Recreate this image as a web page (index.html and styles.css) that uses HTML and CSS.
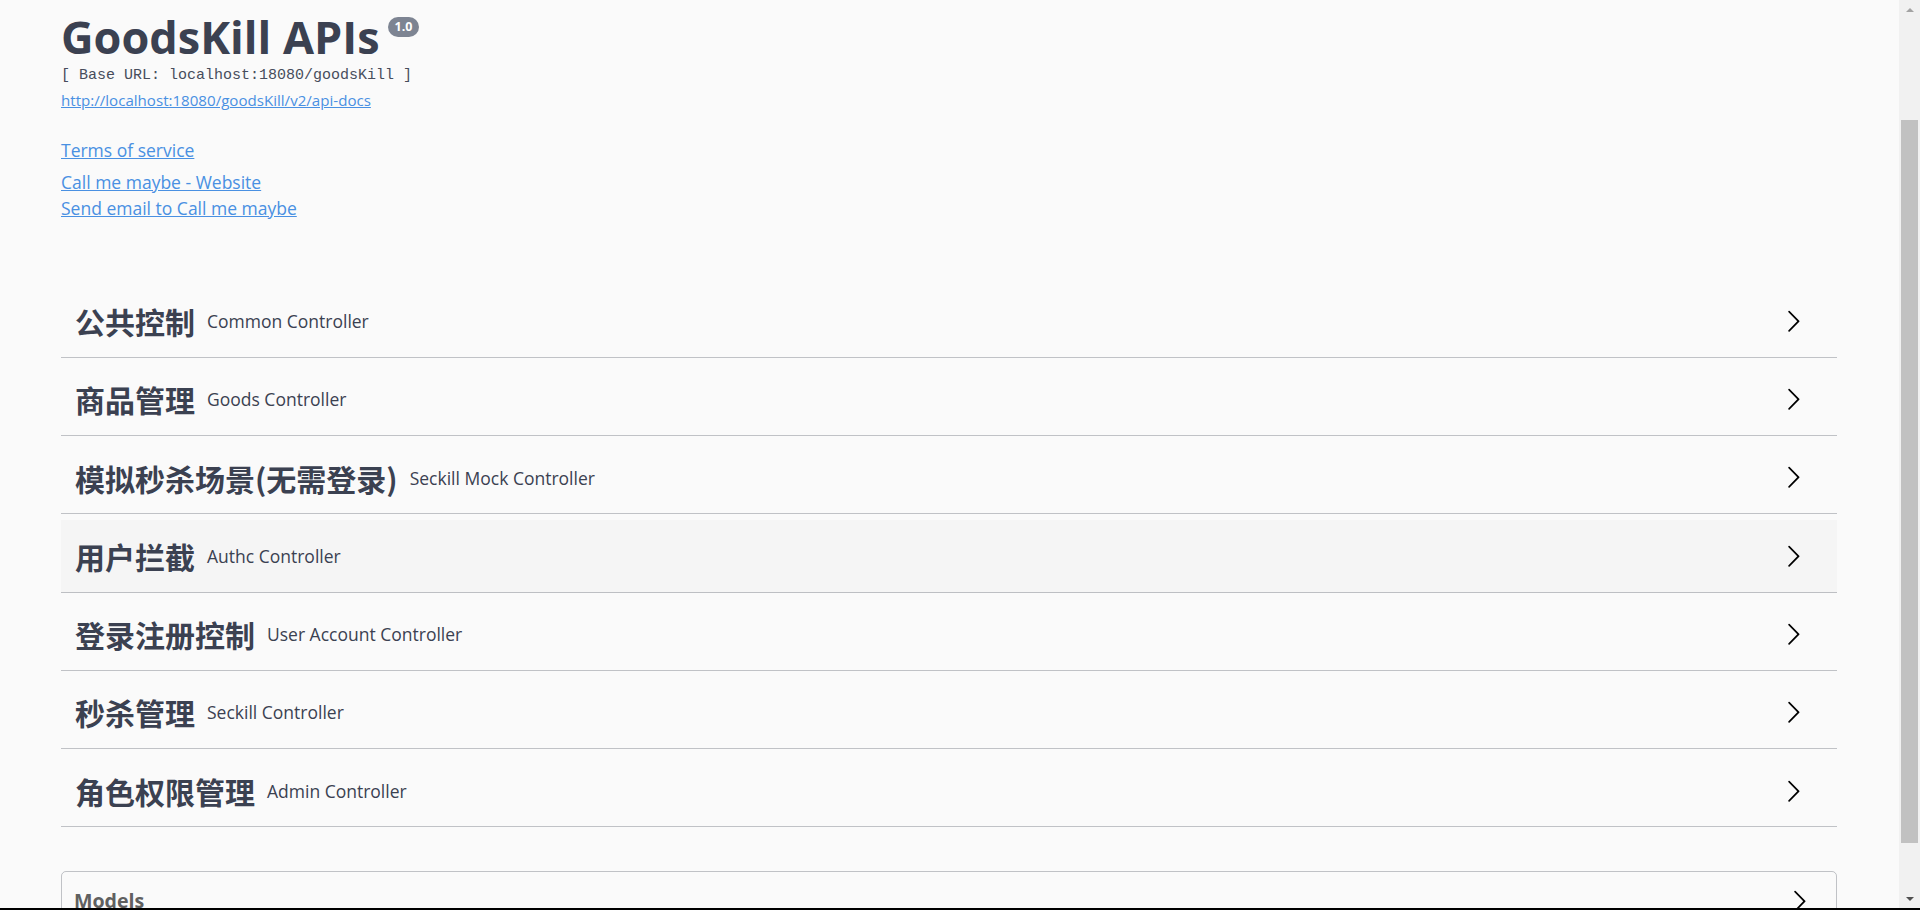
FILE: index.html
```html
<!DOCTYPE html>
<html lang="zh-CN">
<head>
<meta charset="UTF-8" />
<meta name="viewport" content="width=device-width, initial-scale=1" />
<title>GoodsKill APIs</title>
<link rel="stylesheet" href="styles.css">
</head>
<body>

<div class="screen">
  <div class="main">

    <!-- API info -->
    <div class="info">
      <h2 class="title"><span>GoodsKill APIs</span><small>1.0</small></h2>
      <pre class="base-url">[ Base URL: localhost:18080/goodsKill ]</pre>
      <a class="doc-link" href="#">http://localhost:18080/goodsKill/v2/api-docs</a>
      <a class="info-link tos" href="#">Terms of service</a>
      <a class="info-link contact" href="#">Call me maybe - Website</a>
      <a class="info-link" href="#">Send email to Call me maybe</a>
    </div>

    <!-- Tag list -->
    <div class="tags">
      <h4 class="tag"><span class="tag-name">公共控制</span><small>Common Controller</small>
        <svg class="arrow" viewBox="0 0 20 20"><path d="M13.25 10L6.109 2.58a.697.697 0 0 1 0-.979.68.68 0 0 1 .969 0l7.83 7.908a.697.697 0 0 1 0 .979l-7.83 7.908a.68.68 0 0 1-.969 0 .697.697 0 0 1 0-.979L13.25 10z"/></svg>
      </h4>
      <h4 class="tag"><span class="tag-name">商品管理</span><small>Goods Controller</small>
        <svg class="arrow" viewBox="0 0 20 20"><path d="M13.25 10L6.109 2.58a.697.697 0 0 1 0-.979.68.68 0 0 1 .969 0l7.83 7.908a.697.697 0 0 1 0 .979l-7.83 7.908a.68.68 0 0 1-.969 0 .697.697 0 0 1 0-.979L13.25 10z"/></svg>
      </h4>
      <h4 class="tag"><span class="tag-name">模拟秒杀场景(无需登录)</span><small>Seckill Mock Controller</small>
        <svg class="arrow" viewBox="0 0 20 20"><path d="M13.25 10L6.109 2.58a.697.697 0 0 1 0-.979.68.68 0 0 1 .969 0l7.83 7.908a.697.697 0 0 1 0 .979l-7.83 7.908a.68.68 0 0 1-.969 0 .697.697 0 0 1 0-.979L13.25 10z"/></svg>
      </h4>
      <h4 class="tag hover"><span class="tag-name">用户拦截</span><small>Authc Controller</small>
        <svg class="arrow" viewBox="0 0 20 20"><path d="M13.25 10L6.109 2.58a.697.697 0 0 1 0-.979.68.68 0 0 1 .969 0l7.83 7.908a.697.697 0 0 1 0 .979l-7.83 7.908a.68.68 0 0 1-.969 0 .697.697 0 0 1 0-.979L13.25 10z"/></svg>
      </h4>
      <h4 class="tag"><span class="tag-name">登录注册控制</span><small>User Account Controller</small>
        <svg class="arrow" viewBox="0 0 20 20"><path d="M13.25 10L6.109 2.58a.697.697 0 0 1 0-.979.68.68 0 0 1 .969 0l7.83 7.908a.697.697 0 0 1 0 .979l-7.83 7.908a.68.68 0 0 1-.969 0 .697.697 0 0 1 0-.979L13.25 10z"/></svg>
      </h4>
      <h4 class="tag"><span class="tag-name">秒杀管理</span><small>Seckill Controller</small>
        <svg class="arrow" viewBox="0 0 20 20"><path d="M13.25 10L6.109 2.58a.697.697 0 0 1 0-.979.68.68 0 0 1 .969 0l7.83 7.908a.697.697 0 0 1 0 .979l-7.83 7.908a.68.68 0 0 1-.969 0 .697.697 0 0 1 0-.979L13.25 10z"/></svg>
      </h4>
      <h4 class="tag"><span class="tag-name">角色权限管理</span><small>Admin Controller</small>
        <svg class="arrow" viewBox="0 0 20 20"><path d="M13.25 10L6.109 2.58a.697.697 0 0 1 0-.979.68.68 0 0 1 .969 0l7.83 7.908a.697.697 0 0 1 0 .979l-7.83 7.908a.68.68 0 0 1-.969 0 .697.697 0 0 1 0-.979L13.25 10z"/></svg>
      </h4>
    </div>

    <!-- Models -->
    <section class="models">
      <h4><span>Models</span>
        <svg class="arrow" viewBox="0 0 20 20"><path d="M13.25 10L6.109 2.58a.697.697 0 0 1 0-.979.68.68 0 0 1 .969 0l7.83 7.908a.697.697 0 0 1 0 .979l-7.83 7.908a.68.68 0 0 1-.969 0 .697.697 0 0 1 0-.979L13.25 10z"/></svg>
      </h4>
    </section>

  </div>

  <!-- window scrollbar -->
  <div class="scrollbar">
    <span class="sb-arrow up"></span>
    <span class="sb-thumb"></span>
    <span class="sb-arrow down"></span>
  </div>
</div>
<div class="edge"></div>

</body>
</html>
```

FILE: styles.css
```css
html, body {
  margin: 0;
  padding: 0;
  height: 100%;
  overflow: hidden;
}
body {
  background: #fafafa;
  color: #3b4151;
  font-family: "Open Sans", sans-serif;
  display: flex;
  flex-direction: column;
}
.screen {
  flex: 1;
  display: flex;
  min-height: 0;
}
.main {
  flex: 1;
  padding: 0 62px 0 61px;
  overflow: hidden;
}
.edge {
  height: 2px;
  background: #000;
}

/* info block */
.info {
  padding-top: 10px;
  display: flex;
  flex-direction: column;
  align-items: flex-start;
}
.title {
  display: flex;
  align-items: flex-start;
  margin: 0;
  font-size: 45px;
  line-height: 54px;
  font-weight: 700;
  color: #3b4151;
}
.title small {
  margin: 7px 0 0 8px;
  padding: 0 7px;
  height: 20px;
  line-height: 20px;
  border-radius: 70px;
  background: #7d8492;
  color: #fff;
  font-size: 12.5px;
  font-weight: 700;
}
.base-url {
  margin: 3px 0 0;
  font-family: "Liberation Mono", monospace;
  font-size: 15px;
  line-height: 18px;
  color: #474d5c;
}
.doc-link {
  margin-top: 4.5px;
  font-size: 15.1px;
  line-height: 20px;
  color: #4990e2;
}
.info-link {
  font-size: 17.5px;
  line-height: 26px;
  color: #4990e2;
}
.info-link.tos {
  margin-top: 27px;
}
.info-link.contact {
  margin-top: 6px;
}

/* tags */
.tags {
  margin-top: 64.7px;
}
.tag {
  box-sizing: border-box;
  display: flex;
  align-items: center;
  height: 72.33px;
  margin: 0 0 6px;
  padding: 0 32px 0 14px;
  border-bottom: 1px solid rgba(59,65,81,0.3);
}
.tag.hover {
  background: rgba(0,0,0,0.02);
}
.tag-name {
  font-family: "Noto Sans CJK SC", sans-serif;
  font-size: 30px;
  font-weight: 700;
  color: #3b4151;
}
.tag small {
  flex: 1;
  padding: 0 12px;
  font-family: "Open Sans", sans-serif;
  font-size: 17.5px;
  font-weight: 400;
  color: #3b4151;
}
.arrow {
  width: 24.5px;
  height: 24.5px;
  fill: #000;
  flex: none;
}

/* models */
.models {
  margin-top: 44px;
  border: 1px solid rgba(59,65,81,0.3);
  border-radius: 5px;
}
.models h4 {
  display: flex;
  align-items: center;
  margin: 0;
  padding: 15px 25px 12px 12px;
  font-size: 19.6px;
  font-weight: 700;
  color: #606060;
}
.models h4 span {
  flex: 1;
}

/* scrollbar */
.scrollbar {
  width: 21px;
  background: #f1f1f1;
  display: flex;
  flex-direction: column;
  align-items: center;
}
.sb-arrow {
  width: 0;
  height: 0;
  border-left: 4.5px solid transparent;
  border-right: 4.5px solid transparent;
}
.sb-arrow.up {
  margin-top: 8px;
  border-bottom: 4px solid #a3a3a3;
}
.sb-arrow.down {
  margin-top: auto;
  margin-bottom: 7px;
  border-top: 4px solid #505050;
}
.sb-thumb {
  margin-top: 108px;
  width: 17px;
  height: 723px;
  background: #c1c1c1;
}
```
